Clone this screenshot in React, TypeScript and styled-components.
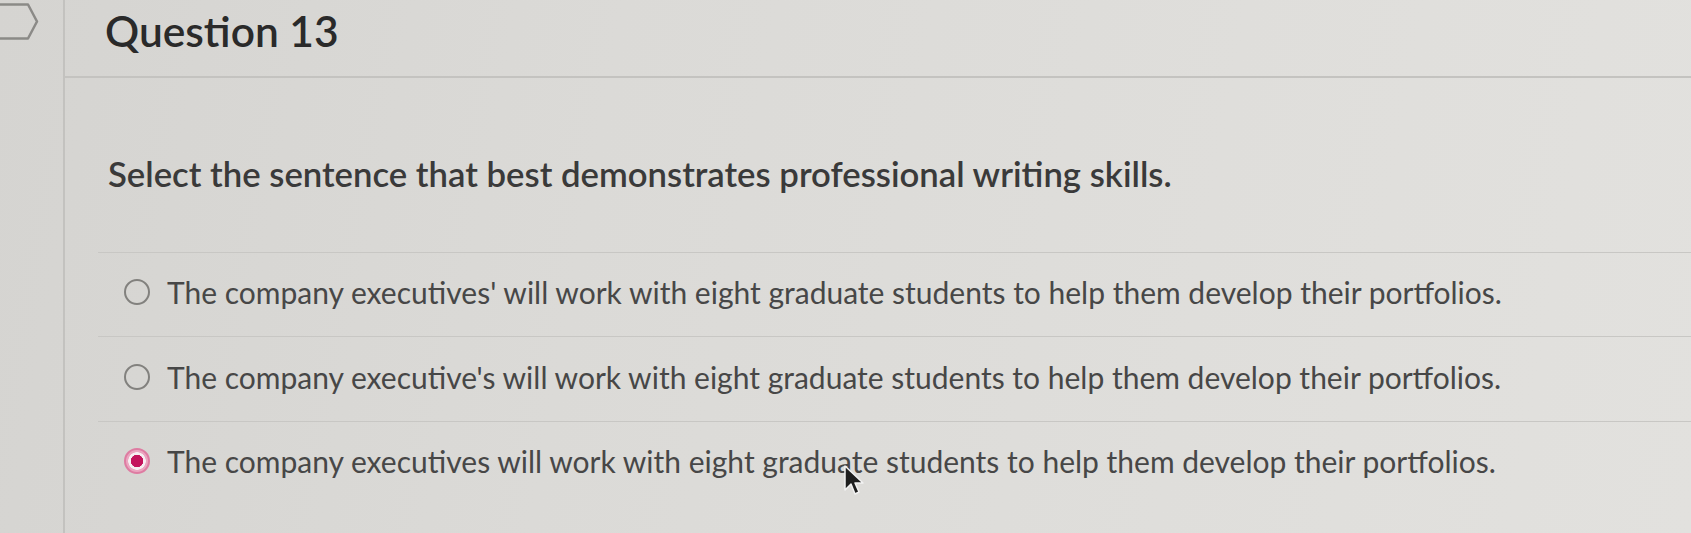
import React from "react";
import styled, { createGlobalStyle } from "styled-components";

const GlobalStyle = createGlobalStyle`
  html, body {
    margin: 0;
    padding: 0;
    width: 1691px;
    height: 533px;
    overflow: hidden;
  }
  body {
    font-family: Lato, "Open Sans", "Liberation Sans", sans-serif;
    background: linear-gradient(100deg, #d5d4d1 0%, #dbdad7 35%, #dfdedb 70%, #e2e1de 100%);
  }
`;

const options = [
  { id: "a", text: "The company executives' will work with eight graduate students to help them develop their portfolios.", checked: false },
  { id: "b", text: "The company executive's will work with eight graduate students to help them develop their portfolios.", checked: false },
  { id: "c", text: "The company executives will work with eight graduate students to help them develop their portfolios.", checked: true },
];

export default function App() {
  return (
    <>
      <GlobalStyle />
      <Page>
        <Sidebar>
          <FlagIcon />
        </Sidebar>
        <Main>
          <Header>
            <Title>Question 13</Title>
          </Header>
          <Prompt>Select the sentence that best demonstrates professional writing skills.</Prompt>
          <OptionList>
            {options.map((o) => (
              <OptionRow key={o.id}>
                <Radio $checked={o.checked} />
                <OptionText>{o.text}</OptionText>
              </OptionRow>
            ))}
          </OptionList>
        </Main>
        <Cursor />
      </Page>
    </>
  );
}

const FlagIcon = () => (
  <FlagSvg width="42" height="44" viewBox="0 0 42 44">
    <path d="M-2 4.5 H28 L37 21.5 L28 38.5 H-2" fill="none" stroke="#8b8a87" strokeWidth="2.5" strokeLinejoin="round" />
  </FlagSvg>
);

const Cursor = () => (
  <CursorSvg width="24" height="34" viewBox="0 0 24 34">
    <path
      d="M2 2 L2 26 L8 20 L12 30 L16 28 L12 19 L20 19 Z"
      fill="#1e1e1e"
      stroke="#f2f2f2"
      strokeWidth="1.5"
      strokeLinejoin="round"
    />
  </CursorSvg>
);

const Page = styled.div`
  position: relative;
  display: flex;
  width: 1691px;
  height: 533px;
`;

const Sidebar = styled.div`
  width: 63px;
  flex: 0 0 63px;
  border-right: 2px solid #c3c2bf;
`;

const FlagSvg = styled.svg`
  display: block;
`;

const Main = styled.div`
  flex: 1;
  display: flex;
  flex-direction: column;
`;

const Header = styled.div`
  height: 76px;
  border-bottom: 2px solid #c4c3c0;
  padding-left: 40px;
  display: flex;
  align-items: center;
`;

const Title = styled.h1`
  margin: -16px 0 0 0;
  font-size: 42.5px;
  font-weight: 600;
  color: #2a2a2a;
`;

const Prompt = styled.p`
  margin: 75px 0 0 0;
  padding-left: 43px;
  font-size: 34.7px;
  font-weight: 600;
  line-height: 1.2;
  color: #3a3a3a;
`;

const OptionList = styled.div`
  margin: 57px 0 0 33px;
  display: flex;
  flex-direction: column;
`;

const OptionRow = styled.label`
  display: flex;
  align-items: center;
  gap: 17px;
  height: 84.5px;
  padding-left: 26px;
  padding-bottom: 4px;
  box-sizing: border-box;
  border-top: 1.5px solid #c8c7c4;
`;

const Radio = styled.span<{ $checked?: boolean }>`
  width: 26px;
  height: 26px;
  flex: 0 0 26px;
  box-sizing: border-box;
  border-radius: 50%;
  border: 2px solid ${(p) => (p.$checked ? "#de7ca2" : "#82817e")};
  background: ${(p) => (p.$checked ? "radial-gradient(circle, #c4135c 0 6px, #f6eef1 6.5px 8.5px, #eba6c0 9px)" : "transparent")};
`;

const OptionText = styled.span`
  font-size: 30px;
  font-weight: 400;
  color: #474747;
  line-height: 1.2;
`;

const CursorSvg = styled.svg`
  position: absolute;
  left: 843px;
  top: 464px;
`;
